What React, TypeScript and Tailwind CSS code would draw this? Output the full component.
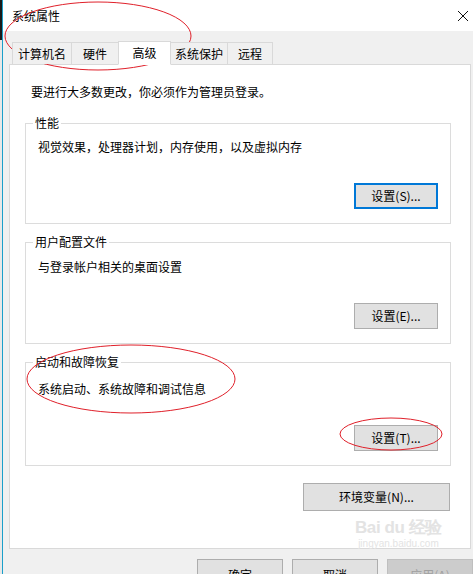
import React from 'react';

const font = { fontFamily: '"Noto Sans CJK SC", "Microsoft YaHei", sans-serif' };

interface GroupProps {
  title: string;
  text: string;
  button: string;
  focused?: boolean;
  className?: string;
}

const WinButton: React.FC<{ label: string; focused?: boolean; className?: string }> = ({ label, focused, className }) => (
  <button
    className={
      'h-[26px] bg-[#e1e1e1] text-[12px] text-black flex items-center justify-center ' +
      (focused ? 'border-2 border-[#0078d7] ' : 'border border-[#adadad] ') +
      (className ?? '')
    }
  >
    {label}
  </button>
);

const GroupBox: React.FC<GroupProps> = ({ title, text, button, focused, className }) => (
  <div className={'relative border border-[#dcdcdc] pb-[14px] pl-[11px] pr-[12px] flex flex-col ' + (className ?? '')}>
    {/* legend sitting on the top border */}
    <span className="absolute -top-[9px] left-[7px] bg-white px-[2px] text-[12px] leading-[16px]">{title}</span>
    <div className="text-[12px] leading-[16px] pl-[1px]">{text}</div>
    <div className="flex justify-end mt-[28px]">
      <WinButton label={button} focused={focused} className="w-[84px]" />
    </div>
  </div>
);

const tabs = ['计算机名', '硬件', '高级', '系统保护', '远程'];
const tabWidths = ['w-[60px]', 'w-[48px]', 'w-[53px]', 'w-[58px]', 'w-[46px]'];

export default function App() {
  return (
    <div className="w-[473px] h-[574px] overflow-hidden relative flex bg-[#f0f0f0] text-black" style={font}>
      {/* edge of the window behind */}
      <div className="w-[2px] flex flex-col shrink-0">
        <div className="h-[40px] bg-[#1a1a1a]" />
        <div className="flex-1 bg-[#e8e8e8]" />
      </div>

      <div className="flex-1 flex flex-col border-l border-[#1a9fca] min-w-0">
        {/* title bar */}
        <div className="h-[31px] bg-white flex items-center justify-between pl-[9px] pr-[3px] shrink-0">
          <span className="text-[12px] leading-[16px]">系统属性</span>
          <svg width="12" height="12" viewBox="0 0 12 12" className="mr-[1px]">
            <path d="M1 1 L11 11 M11 1 L1 11" stroke="#111" strokeWidth="1" />
          </svg>
        </div>

        <div className="flex flex-col pl-[6px] pr-0">
          {/* tabs */}
          <div className="flex items-end h-[33px] pl-[3px] relative z-10">
            {tabs.map((t, i) => {
              const active = i === 2;
              return (
                <div
                  key={t}
                  className={
                    tabWidths[i] +
                    ' flex items-center justify-center text-[12px] border border-[#d9d9d9] ' +
                    (i > 0 ? '-ml-px ' : '') +
                    (active
                      ? 'h-[24px] bg-white border-b-white -mb-px relative z-10'
                      : 'h-[22px] bg-[#f0f0f0] border-b-0 mb-0')
                  }
                >
                  {t}
                </div>
              );
            })}
          </div>

          {/* tab page */}
          <div className="h-[485px] mr-[2px] bg-white border border-[#d9d9d9] pt-[19px] pl-[15px] pr-[19px] flex flex-col">
            <div className="text-[12px] leading-[16px] pl-[6px]">要进行大多数更改，你必须作为管理员登录。</div>

            <GroupBox className="mt-[23px] pt-[15px]" title="性能" text="视觉效果，处理器计划，内存使用，以及虚拟内存" button="设置(S)..." focused />
            <GroupBox className="mt-[18px] pt-[16px]" title="用户配置文件" text="与登录帐户相关的桌面设置" button="设置(E)..." />
            <GroupBox className="mt-[18px] pt-[18px]" title="启动和故障恢复" text="系统启动、系统故障和调试信息" button="设置(T)..." />

            <div className="flex justify-end mt-[17px] pr-[1px]">
              <WinButton label="环境变量(N)..." className="w-[147px] h-[28px]" />
            </div>
          </div>

          {/* dialog buttons */}
          <div className="flex justify-end gap-[9px] mt-[10px]">
            <WinButton label="确定" className="w-[86px] h-[26px] pt-[6px]" />
            <WinButton label="取消" className="w-[86px] h-[26px] pt-[6px]" />
            <button className="w-[86px] h-[26px] bg-[#cccccc] border border-[#bfbfbf] text-[12px] text-[#a0a0a0] pt-[6px]">应用(A)</button>
          </div>
        </div>
      </div>

      {/* baidu watermark */}
      <div className="absolute left-[355px] top-[518px] flex flex-col items-center pointer-events-none text-[#e3e3e3]">
        <span className="text-[17px] font-bold leading-[20px] tracking-tight" style={{ fontFamily: 'Arial, "Liberation Sans", sans-serif' }}>Bai du 经验</span>
        <span className="text-[10px] leading-[12px]" style={{ fontFamily: 'Arial, "Liberation Sans", sans-serif' }}>jingyan.baidu.com</span>
      </div>

      {/* red annotation ellipses */}
      <svg className="absolute inset-0 pointer-events-none" width="473" height="574">
        <ellipse cx="98" cy="36" rx="93" ry="34" fill="none" stroke="#e0202a" strokeWidth="1" />
        <ellipse cx="131" cy="379" rx="104" ry="34" fill="none" stroke="#e0202a" strokeWidth="1" />
        <ellipse cx="391" cy="434" rx="51" ry="16" fill="none" stroke="#e0202a" strokeWidth="1" />
      </svg>
    </div>
  );
}
